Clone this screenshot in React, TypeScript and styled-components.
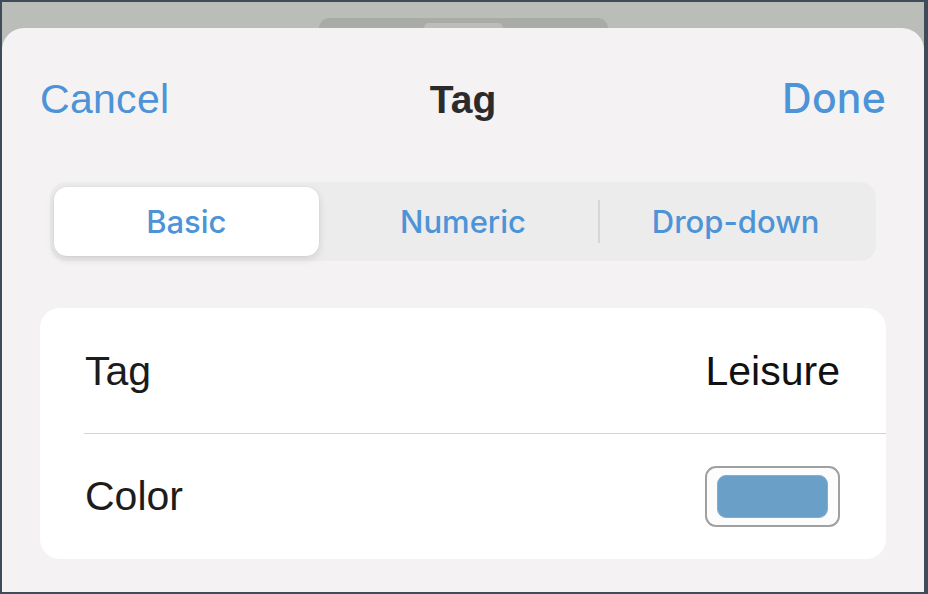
import React from "react";
import styled, { createGlobalStyle } from "styled-components";

const GlobalStyle = createGlobalStyle`
  html, body {
    margin: 0;
    padding: 0;
    background: #3e4b59;
  }
  body {
    font-family: "Liberation Sans", Arial, sans-serif;
  }
`;

const segments = ["Basic", "Numeric", "Drop-down"];

function App() {
  const active = 0;
  return (
    <>
      <GlobalStyle />
      <Frame>
        <Backdrop>
          <PeekSheet>
            <PeekHandle />
          </PeekSheet>
        </Backdrop>
        <Sheet>
          <Header>
            <NavButton>Cancel</NavButton>
            <Title>Tag</Title>
            <NavButton $primary>Done</NavButton>
          </Header>

          <Segmented>
            {segments.map((label, i) => (
              <Segment
                key={label}
                $active={i === active}
                $divider={i > 0 && i !== active && i - 1 !== active}
              >
                {label}
              </Segment>
            ))}
          </Segmented>

          <Card>
            <Row>
              <RowLabel>Tag</RowLabel>
              <RowValue>Leisure</RowValue>
            </Row>
            <Row>
              <RowLabel>Color</RowLabel>
              <Swatch>
                <SwatchFill />
              </Swatch>
            </Row>
          </Card>
        </Sheet>
      </Frame>
    </>
  );
}

export default App;

const Frame = styled.div`
  box-sizing: border-box;
  width: 928px;
  height: 594px;
  border: 2px solid #3e4b59;
  border-right-width: 4px;
  background: #bbbdb8;
  display: flex;
  flex-direction: column;
  overflow: hidden;
`;

const Backdrop = styled.div`
  height: 26px;
  display: flex;
  justify-content: center;
  align-items: flex-end;
  flex-shrink: 0;
`;

const PeekSheet = styled.div`
  width: 289px;
  height: 10px;
  border-radius: 12px 12px 0 0;
  background: #a9aba7;
  display: flex;
  justify-content: center;
  align-items: flex-end;
`;

const PeekHandle = styled.div`
  width: 79px;
  height: 5px;
  border-radius: 8px 8px 0 0;
  background: #bcbdb9;
`;

const Sheet = styled.div`
  flex: 1;
  background: #f4f2f3;
  border-radius: 22px 22px 0 0;
  display: flex;
  flex-direction: column;
`;

const Header = styled.div`
  display: grid;
  grid-template-columns: 1fr auto 1fr;
  align-items: baseline;
  padding: 50px 38px 0;
  line-height: 41px;
`;

const NavButton = styled.span<{ $primary?: boolean }>`
  font-size: 41px;
  color: #4c93d7;
  font-family: ${(p) =>
    p.$primary ? "Inter, sans-serif" : '"Liberation Sans", Arial, sans-serif'};
  font-weight: ${(p) => (p.$primary ? 500 : 400)};
  justify-self: ${(p) => (p.$primary ? "end" : "start")};
  letter-spacing: ${(p) => (p.$primary ? "0.2px" : "0.3px")};
`;

const Title = styled.span`
  font-size: 39px;
  font-weight: 700;
  color: #2b2b2b;
`;

const Segmented = styled.div`
  margin: 62px 48px 0;
  height: 79px;
  box-sizing: border-box;
  padding: 5px 4px;
  border-radius: 16px;
  background: #ececec;
  display: grid;
  grid-template-columns: repeat(3, 1fr);
`;

const Segment = styled.div<{ $active?: boolean; $divider?: boolean }>`
  position: relative;
  display: flex;
  align-items: center;
  justify-content: center;
  border-radius: 13px;
  font-family: Inter, sans-serif;
  font-weight: 500;
  font-size: 31px;
  color: #4c93d7;
  background: ${(p) => (p.$active ? "#ffffff" : "transparent")};
  box-shadow: ${(p) =>
    p.$active
      ? "0 3px 8px rgba(0, 0, 0, 0.12), 0 0 0 0.5px rgba(0, 0, 0, 0.04)"
      : "none"};
  margin: ${(p) => (p.$active ? "0 8px 0 0" : "0")};

  &::before {
    content: "";
    display: ${(p) => (p.$divider ? "block" : "none")};
    position: absolute;
    left: -1px;
    top: 13px;
    bottom: 13px;
    width: 2px;
    background: #d6d6d6;
  }
`;

const Card = styled.div`
  margin: 47px 38px 0;
  background: #ffffff;
  border-radius: 20px;
  overflow: hidden;
`;

const Row = styled.div`
  height: 126px;
  display: flex;
  align-items: center;
  justify-content: space-between;
  padding: 0 46px 0 45px;
  position: relative;

  & + & {
    height: 125px;
  }

  & + &::before {
    content: "";
    position: absolute;
    top: -1px;
    left: 44px;
    right: 0;
    height: 1px;
    background: #d3d3d3;
  }
`;

const RowLabel = styled.span`
  font-size: 41px;
  color: #1c1c1c;
  line-height: 41px;
`;

const RowValue = styled.span`
  font-size: 41px;
  color: #111111;
  line-height: 41px;
`;

const Swatch = styled.div`
  box-sizing: border-box;
  width: 135px;
  height: 61px;
  border: 2px solid #a0a0a0;
  border-radius: 11px;
  background: #fdfcfd;
  padding: 7px 10px;
  display: flex;
`;

const SwatchFill = styled.div`
  flex: 1;
  border-radius: 9px;
  background: #6aa0c8;
  border: 1px solid #7eb0d4;
`;
